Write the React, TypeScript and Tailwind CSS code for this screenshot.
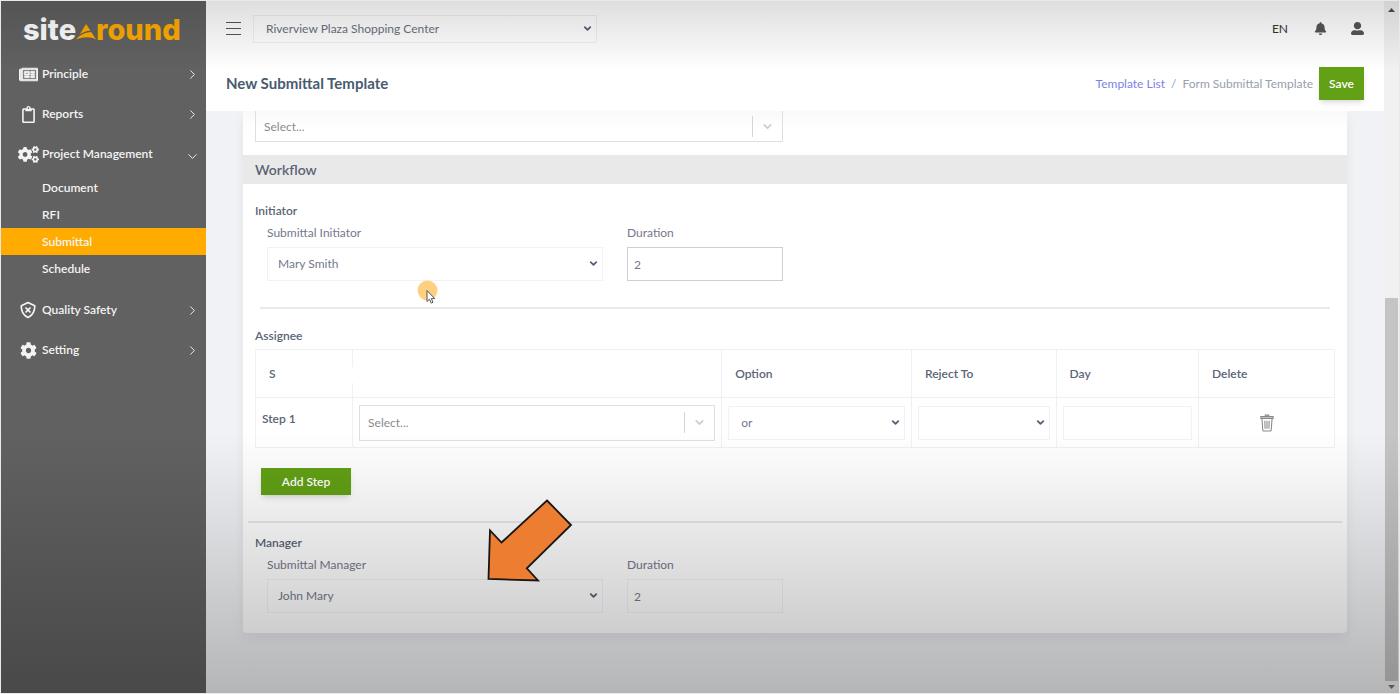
import React from "react";
import type { ReactNode } from "react";
import { FaBell, FaCogs, FaCog, FaRegClipboard, FaRegNewspaper, FaUserAlt } from "react-icons/fa";
import { BiShieldX } from "react-icons/bi";
import { ChevronDown, ChevronRight } from "lucide-react";

function Logo() {
  return (
    <a
      href="#home"
      aria-label="sitearound"
      className="flex h-[53px] items-center pt-1 pl-[22px] font-['Inter',sans-serif] text-[29px] leading-8 font-extrabold text-white"
    >
      <span>site</span>
      <svg viewBox="0 0 20 16" className="mt-1 h-4 w-5 fill-[#ffab00]" aria-hidden="true">
        <path d="M10 0l4.400 6.600C10 7.200 6.500 8.600 3.800 10.600z" />
        <path d="M15.200 8L20 15.500C15.500 12.800 8 12.500 0 15.500 3.500 11 9 8.300 15.200 8z" />
      </svg>
      <span className="text-[#ffab00]">round</span>
    </a>
  );
}

function NavRow({ icon, label, open = false }: { icon: ReactNode; label: string; open?: boolean }) {
  return (
    <button type="button" aria-expanded={open} className="flex h-10 w-full items-center gap-[2px] pr-[6px] pl-[15px] text-left">
      <span className="flex w-6 shrink-0 items-center justify-center">{icon}</span>
      <span className="flex-1 truncate">{label}</span>
      {open ? (
        <ChevronDown size={15} strokeWidth={1.5} className="mt-1" />
      ) : (
        <ChevronRight size={15} strokeWidth={1.5} />
      )}
    </button>
  );
}

const projectLinks = ["Document", "RFI", "Submittal", "Schedule"];

function Sidebar() {
  return (
    <aside className="w-[205px] shrink-0 bg-[#616161] text-xs font-semibold text-[#f4f4f4]">
      <Logo />
      <nav>
        <NavRow icon={<FaRegNewspaper size={19} stroke="currentColor" strokeWidth={22} />} label="Principle" />
        <NavRow icon={<FaRegClipboard size={17} />} label="Reports" />
        <NavRow icon={<FaCogs size={21} />} label="Project Management" open />
        <ul className="pb-2">
          {projectLinks.map((name) => (
            <li key={name}>
              <a
                href={"#" + name.toLowerCase()}
                className={
                  name === "Submittal"
                    ? "flex h-[27px] items-center bg-[#ffab00] pl-[41px]"
                    : "flex h-[27px] items-center pl-[41px]"
                }
              >
                {name}
              </a>
            </li>
          ))}
        </ul>
        <NavRow icon={<BiShieldX size={20} />} label="Quality Safety" />
        <NavRow icon={<FaCog size={17} />} label="Setting" />
      </nav>
    </aside>
  );
}

function SelectBox({ id, label, options }: { id: string; label?: string; options: string[] }) {
  return (
    <div className="relative">
      <select
        id={id}
        aria-label={label}
        className={
          label
            ? "block h-[34px] w-full appearance-none border border-[#f1f2f5] bg-transparent pr-6 pl-3 text-[#74788d]"
            : "block h-[34px] w-full appearance-none border border-[#f1f2f5] bg-transparent pr-6 pl-[10px] text-[#74788d]"
        }
      >
        {options.map((o) => (
          <option key={o}>{o}</option>
        ))}
      </select>
      <ChevronDown
        size={11}
        strokeWidth={4}
        className="pointer-events-none absolute top-[11px] right-1 text-[#5b5f78]"
      />
    </div>
  );
}

function Combo({ label, clipped = false }: { label: string; clipped?: boolean }) {
  return (
    <div
      className={
        clipped
          ? "flex h-[31px] items-center border border-t-0 border-[#dfdfdf]"
          : "flex h-9 items-center border border-[#dfdfdf]"
      }
    >
      <input
        type="text"
        role="combobox"
        aria-expanded={false}
        aria-label={label}
        placeholder="Select..."
        className="h-full min-w-0 flex-1 bg-transparent pl-2 outline-none placeholder:text-[#8b8b8b]"
      />
      <span className="h-[21px] w-px bg-[#d5d5d5]" />
      <button type="button" aria-label={"Open " + label} className="flex w-[29px] justify-center text-[#cccccc]">
        <ChevronDown size={13} strokeWidth={3} />
      </button>
    </div>
  );
}

function PersonRow({
  id,
  label,
  person,
  active = false,
}: {
  id: string;
  label: string;
  person: string;
  active?: boolean;
}) {
  return (
    <div className="grid grid-cols-12">
      <div className="col-span-4 px-3">
        <label htmlFor={id} className="block h-[22px] leading-4">
          {label}
        </label>
        <SelectBox id={id} options={[person]} />
      </div>
      <div className="col-span-2 px-3">
        <label htmlFor={id + "-duration"} className="block h-[22px] leading-4">
          Duration
        </label>
        <input
          id={id + "-duration"}
          type="text"
          defaultValue="2"
          className={
            active
              ? "block h-[34px] w-full border border-[#cdd0d4] bg-transparent px-[6px]"
              : "block h-[34px] w-full border border-[#f1f2f5] bg-transparent px-[6px]"
          }
        />
      </div>
    </div>
  );
}

function TrashIcon() {
  return (
    <svg viewBox="0 0 16 20" className="h-[18px] w-[14px]" fill="none" stroke="#888" aria-hidden="true">
      <path d="M6 2V.8h4V2M1 2.600h14v2.200H1z" fill="#c4c4c4" strokeWidth="1.200" />
      <path d="M2.200 5l1 13.200q.1 1 1 1h7.600q.9 0 1-1L13.800 5M5.500 7.500l.3 9M8 7.500v9M10.500 7.500l-.3 9" strokeWidth="1.200" />
    </svg>
  );
}

const headCell = "border border-[#eff0f3] px-[13px] text-left font-semibold";
const bodyCell = "border border-[#eff0f3] px-[6px]";

function AssigneeTable() {
  return (
    <table className="w-full table-fixed border-collapse">
      <colgroup>
        <col className="w-[9%]" />
        <col className="w-[34.200%]" />
        <col className="w-[17.600%]" />
        <col className="w-[13.400%]" />
        <col className="w-[13.200%]" />
        <col className="w-[12.600%]" />
      </colgroup>
      <thead>
        <tr className="h-12">
          <th className={headCell}>S</th>
          <th className={headCell + " relative"}>
            <span className="absolute top-[17px] -left-1 h-4 w-2 bg-white" />
          </th>
          <th className={headCell}>Option</th>
          <th className={headCell}>Reject To</th>
          <th className={headCell}>Day</th>
          <th className={headCell}>Delete</th>
        </tr>
      </thead>
      <tbody>
        <tr className="h-[50px]">
          <th scope="row" className={bodyCell + " pb-2 text-left font-semibold"}>
            Step 1
          </th>
          <td className={bodyCell}>
            <Combo label="Assignee" />
          </td>
          <td className={bodyCell}>
            <SelectBox id="option" label="Option" options={["or", "and"]} />
          </td>
          <td className={bodyCell}>
            <SelectBox id="reject-to" label="Reject To" options={[""]} />
          </td>
          <td className={bodyCell}>
            <input
              type="text"
              aria-label="Day"
              className="block h-[34px] w-full border border-[#f1f2f5] bg-transparent px-2"
            />
          </td>
          <td className={bodyCell + " text-center"}>
            <button type="button" aria-label="Delete step" className="align-middle">
              <TrashIcon />
            </button>
          </td>
        </tr>
      </tbody>
    </table>
  );
}

function TopBar() {
  return (
    <header className="flex h-[55px] items-center bg-white px-5">
      <button type="button" aria-label="Toggle menu" className="flex w-[15px] flex-col gap-[5px]">
        <span className="h-px bg-[#555]" />
        <span className="h-px bg-[#555]" />
        <span className="h-px bg-[#555]" />
      </button>
      <div className="relative ml-3 w-[344px]">
        <select
          aria-label="Project"
          className="block h-7 w-full appearance-none border border-[#eff0f2] bg-transparent pl-3 text-[#6b7080]"
        >
          <option>Riverview Plaza Shopping Center</option>
        </select>
        <ChevronDown size={11} strokeWidth={4} className="pointer-events-none absolute top-2 right-1 text-[#5b5f78]" />
      </div>
      <div className="ml-auto flex items-center gap-6 text-[#555]">
        <button type="button" className="mr-[2px] text-[#333]">EN</button>
        <button type="button" aria-label="Notifications">
          <FaBell size={13} />
        </button>
        <button type="button" aria-label="Account">
          <FaUserAlt size={13} />
        </button>
      </div>
    </header>
  );
}

function TitleBar() {
  return (
    <div className="flex h-[55px] items-center bg-white px-5">
      <h1 className="text-[15px] font-bold text-[#495a70]">New Submittal Template</h1>
      <nav className="ml-auto flex items-center gap-[6px] text-[#98a0ac]">
        <a href="#templates" className="text-[#7a82e8]">Template List</a>
        <span>/</span>
        <span>Form Submittal Template</span>
        <button type="button" className="h-[33px] w-[45px] bg-[#62a015] font-semibold text-white shadow-md">
          Save
        </button>
      </nav>
    </div>
  );
}

function ScrollBar() {
  return (
    <div className="flex w-[15px] shrink-0 flex-col items-center bg-[#f1f1f1]" aria-hidden="true">
      <svg viewBox="0 0 7 4" className="mt-[7px] h-1 w-[7px] fill-[#505050]"><path d="M0 4L3.500 0 7 4z" /></svg>
      <div className="grow-[286]" />
      <div className="w-[13px] grow-[383] bg-[#c4c4c4]" />
      <svg viewBox="0 0 7 4" className="my-1 h-1 w-[7px] fill-[#777]"><path d="M0 0L3.500 4 7 0z" /></svg>
    </div>
  );
}

function Pointer() {
  return (
    <svg viewBox="0 0 24 28" className="pointer-events-none absolute top-[279px] left-[416px] h-7 w-6" aria-hidden="true">
      <circle cx="11.500" cy="11.500" r="10" fill="#ffd080" />
      <path d="M11 11.500v11l2.500-2.300 1.700 3.900 1.800-.8-1.700-3.700h3.400z" fill="#fff" stroke="#555" strokeWidth="1" />
    </svg>
  );
}

function Arrow() {
  return (
    <svg viewBox="0 0 90 88" className="pointer-events-none absolute top-[496px] left-[484px] h-[88px] w-[90px]" aria-hidden="true">
      <path d="M63 4.500L87 29 42.800 72.300 54 84.500 4.500 83 6 34.500 17.500 46.500z" fill="#ed7d31" stroke="#161616" strokeWidth="1.800" />
    </svg>
  );
}

export default function App() {
  return (
    <div className="relative flex min-h-screen bg-[#e9e9e9] p-px font-['Lato',sans-serif] text-xs text-[#74788d]">
      <Sidebar />
      <div className="flex min-w-0 flex-1 flex-col bg-[#f1f2f5]">
        <TopBar />
        <TitleBar />
        <main className="mx-[37px] rounded-b-sm bg-white pb-5 shadow-[0_6px_12px_rgba(18,38,63,0.06)]">
          <div className="grid grid-cols-12 bg-linear-to-b from-[#f9f9f9] to-white to-40% px-3 pb-[13px]">
            <div className="col-span-6 pr-3">
              <Combo label="Template" clipped />
            </div>
          </div>
          <h2 className="bg-[#e9e9e9] px-3 text-sm leading-[29px] font-semibold text-[#5a6475]">Workflow</h2>
          <section className="px-3 pt-[19px]">
            <h3 className="mb-[6px] leading-4 font-semibold text-[#5a6475]">Initiator</h3>
            <PersonRow id="initiator" label="Submittal Initiator" person="Mary Smith" active />
            <hr className="mx-[5px] mt-[26px] border-t-2 border-[#e9e9e9]" />
          </section>
          <section className="px-3 pt-[19px] text-[#5a6475]">
            <h3 className="mb-[5px] leading-4 font-semibold">Assignee</h3>
            <AssigneeTable />
            <button type="button" className="mt-5 ml-[6px] block h-[27px] w-[90px] bg-[#62a015] font-semibold text-white shadow-md">
              Add Step
            </button>
          </section>
          <hr className="mx-[5px] mt-[26px] border-t-2 border-[#e9e9e9]" />
          <section className="px-3 pt-3">
            <h3 className="mb-[6px] leading-4 font-semibold text-[#5a6475]">Manager</h3>
            <PersonRow id="manager" label="Submittal Manager" person="John Mary" />
          </section>
        </main>
      </div>
      <ScrollBar />
      <div className="pointer-events-none absolute inset-x-px top-px h-[70px] bg-linear-to-b from-black/13 to-transparent" />
      <div className="pointer-events-none absolute inset-x-px bottom-px h-[260px] bg-linear-to-b from-transparent to-black/25" />
      <Pointer />
      <Arrow />
    </div>
  );
}
